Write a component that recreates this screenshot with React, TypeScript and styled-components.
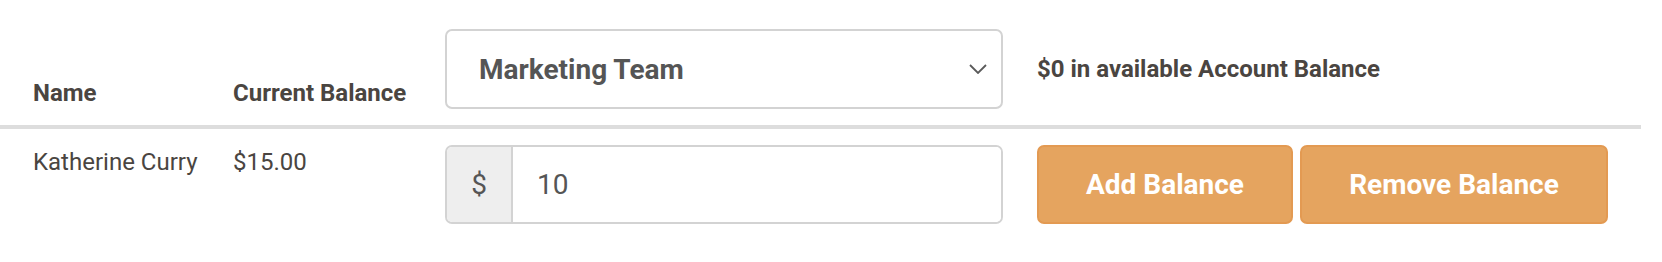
import React from 'react';
import styled, { createGlobalStyle } from 'styled-components';

const GlobalStyle = createGlobalStyle`
  body {
    margin: 0;
    background: #fff;
    font-family: Roboto, 'Liberation Sans', Arial, sans-serif;
    color: #4a4541;
  }
`;

const App: React.FC = (): JSX.Element => {
  return (
    <>
      <GlobalStyle />
      <StTable>
        <StHeadRow>
          <StHeadCell>Name</StHeadCell>
          <StHeadCell>Current Balance</StHeadCell>
          <StSelectWrap>
            <StSelect defaultValue="marketing">
              <option value="marketing">Marketing Team</option>
              <option value="sales">Sales Team</option>
            </StSelect>
            <StChevron viewBox="0 0 18 10" aria-hidden>
              <path d="M1 1 L9 9 L17 1" />
            </StChevron>
          </StSelectWrap>
          <StAvailable>$0 in available Account Balance</StAvailable>
        </StHeadRow>
        <StBodyRow>
          <StCell>Katherine Curry</StCell>
          <StCell>$15.00</StCell>
          <StInputGroup>
            <span className="addon">$</span>
            <input defaultValue="10" />
          </StInputGroup>
          <StActions>
            <StButton $width={256}>Add Balance</StButton>
            <StButton $width={308}>Remove Balance</StButton>
          </StActions>
        </StBodyRow>
      </StTable>
    </>
  );
};

export default App;

const StTable = styled.div`
  width: 1641px;
`;

const StHeadRow = styled.div`
  display: grid;
  grid-template-columns: 200px 212px 592px 1fr;
  padding: 29px 0 16px 33px;
  border-bottom: 4px solid #dddddd;
`;

const StHeadCell = styled.div`
  align-self: end;
  font-size: 24px;
  font-weight: 700;
  line-height: 28px;
  margin-bottom: 2px;
`;

const StSelectWrap = styled.div`
  position: relative;
  width: 558px;
`;

const StSelect = styled.select`
  appearance: none;
  width: 100%;
  height: 80px;
  box-sizing: border-box;
  border: 2px solid #d3d3d3;
  border-radius: 7px;
  background: #fff;
  padding: 0 60px 0 32px;
  font-family: Roboto, 'Liberation Sans', Arial, sans-serif;
  font-size: 28px;
  font-weight: 700;
  color: #555555;
  outline: none;
`;

const StChevron = styled.svg`
  position: absolute;
  right: 16px;
  top: 35px;
  width: 18px;
  height: 10px;
  fill: none;
  stroke: #5a5a5a;
  stroke-width: 1.8;
  pointer-events: none;
`;

const StAvailable = styled.div`
  align-self: center;
  font-size: 24px;
  font-weight: 700;
`;

const StBodyRow = styled.div`
  display: grid;
  grid-template-columns: 200px 212px 592px 1fr;
  padding: 16px 0 37px 33px;
`;

const StCell = styled.div`
  font-size: 24px;
  line-height: 28px;
  padding-top: 3px;
`;

const StInputGroup = styled.div`
  display: flex;
  width: 558px;
  height: 79px;
  box-sizing: border-box;
  border: 2px solid #d3d3d3;
  border-radius: 7px;
  overflow: hidden;

  .addon {
    display: flex;
    align-items: center;
    justify-content: center;
    width: 64px;
    background: #eeeeee;
    border-right: 2px solid #d3d3d3;
    font-size: 28px;
    color: #555555;
  }

  input {
    flex: 1;
    border: 0;
    outline: none;
    padding: 0 24px;
    font-family: Roboto, 'Liberation Sans', Arial, sans-serif;
    font-size: 28px;
    color: #555555;
  }
`;

const StActions = styled.div`
  display: flex;
  gap: 7px;
`;

const StButton = styled.button<{ $width: number }>`
  width: ${({ $width }) => $width}px;
  height: 79px;
  border: 2px solid #e39a52;
  border-radius: 7px;
  background: #e5a45f;
  color: #ffffff;
  font-family: Roboto, 'Liberation Sans', Arial, sans-serif;
  font-size: 28px;
  font-weight: 700;
  cursor: pointer;
`;
